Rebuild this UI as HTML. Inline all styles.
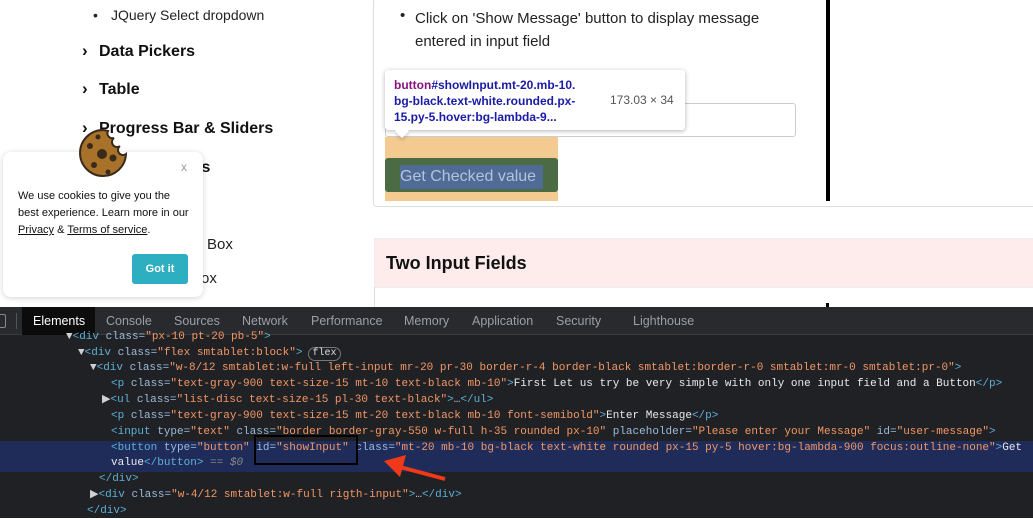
<!DOCTYPE html>
<html><head><meta charset="utf-8"><style>
*{margin:0;padding:0;box-sizing:border-box}
body{width:1033px;height:518px;overflow:hidden;background:#fff;font-family:"Liberation Sans",sans-serif;position:relative}
.a{position:absolute;white-space:nowrap}
.h{font-weight:bold;font-size:16px;color:#111}
.ch{position:absolute;font-weight:bold;font-size:17px;color:#111}
.dev{position:absolute;left:0;top:307px;width:1033px;height:211px;background:#202124}
.tab{position:absolute;top:7px;font-size:12.5px;color:#9aa0a6}
.cl{position:absolute;font-family:"Liberation Mono",monospace;font-size:11px;line-height:16px;white-space:pre;color:#cfd0d0}
.t{color:#5db0d7}.n{color:#9bbbdc}.v{color:#f29766}.w{color:#e8eaed}
</style></head><body>
<!-- left nav -->
<div class="a" style="left:93px;top:7px;font-size:14px;color:#222">•</div>
<div class="a" style="left:111px;top:7px;font-size:14px;color:#222">JQuery Select dropdown</div>
<div class="ch" style="left:82px;top:41px">›</div><div class="a h" style="left:99px;top:43px">Data Pickers</div>
<div class="ch" style="left:82px;top:79px">›</div><div class="a h" style="left:99px;top:81px">Table</div>
<div class="ch" style="left:82px;top:118px">›</div><div class="a h" style="left:99px;top:120px">Progress Bar &amp; Sliders</div>
<div class="a h" style="left:197px;top:159px">ls</div>
<div class="a" style="left:207px;top:236px;font-size:15px;color:#222">Box</div>
<div class="a" style="left:201px;top:270px;font-size:15px;color:#222">ox</div>

<!-- right card -->
<div class="a" style="left:373px;top:-2px;width:700px;height:209px;border:1px solid #ddd;border-radius:4px"></div>
<div class="a" style="left:826px;top:0;width:4px;height:201px;background:#000"></div>
<div class="a" style="left:400px;top:7px;font-size:15px;color:#222">•</div>
<div class="a" style="left:415px;top:7px;font-size:15px;color:#222;line-height:23px">Click on 'Show Message' button to display message<br>entered in input field</div>
<div class="a" style="left:385px;top:103px;width:411px;height:34px;border:1px solid #ccc;border-radius:3px"></div>
<div class="a" style="left:385px;top:137px;width:173px;height:64px;background:#f3cb91"></div>
<div class="a" style="left:385px;top:158px;width:173px;height:34px;background:#4a6b44;border-radius:3px"></div>
<div class="a" style="left:400px;top:165px;width:143px;height:24px;background:#4f6b96;color:#b3c3dc;font-size:16px;line-height:24px">Get Checked value</div>
<!-- tooltip -->
<div class="a" style="left:385px;top:70px;width:300px;height:60px;background:#fff;border-radius:3px;box-shadow:0 1px 5px rgba(0,0,0,.3)"></div>
<div class="a" style="left:397px;top:126px;width:10px;height:10px;background:#fff;transform:rotate(45deg);box-shadow:2px 2px 3px rgba(0,0,0,.15)"></div>
<div class="a" style="left:394px;top:77px;font-size:12px;font-weight:bold;line-height:16px;color:#1a1aa6"><span style="color:#881280">button</span>#showInput.mt-20.mb-10.<br>bg-black.text-white.rounded.px-<br>15.py-5.hover:bg-lambda-9...</div>
<div class="a" style="left:610px;top:93px;font-size:12px;color:#555">173.03 × 34</div>

<div class="a" style="left:374px;top:238px;width:670px;height:50px;background:#fdeceb;border:1px solid #eee"></div>
<div class="a" style="left:386px;top:253px;font-size:18px;font-weight:bold;color:#111">Two Input Fields</div>
<div class="a" style="left:374px;top:287px;width:1px;height:20px;background:#ddd"></div>
<div class="a" style="left:826px;top:303px;width:3px;height:4px;background:#000"></div>

<!-- cookie popup -->
<div class="a" style="left:3px;top:152px;width:200px;height:145px;background:#fff;border-radius:8px;box-shadow:0 1px 6px rgba(0,0,0,.18)"></div>
<svg class="a" style="left:78px;top:128px" width="50" height="50" viewBox="0 0 50 50">
<path d="M25 2 A23 23 0 1 0 48 26 A5 5 0 0 1 42 18 A5 5 0 0 1 36 10 A5 5 0 0 1 30 3 Z" fill="#a9722b" stroke="#3a2a1a" stroke-width="2"/>
<circle cx="24" cy="26" r="5" fill="#3a2a1a"/><circle cx="12" cy="18" r="3" fill="#3a2a1a"/><circle cx="16" cy="37" r="3" fill="#3a2a1a"/><circle cx="35" cy="30" r="3.5" fill="#3a2a1a"/><circle cx="20" cy="9" r="2.5" fill="#3a2a1a"/><circle cx="30" cy="44" r="2.5" fill="#3a2a1a"/>
</svg>
<div class="a" style="left:181px;top:160px;font-size:12px;color:#999">x</div>
<div class="a" style="left:18px;top:188px;font-size:11px;line-height:17px;color:#111">We use cookies to give you the<br>best experience. Learn more in our<br><u>Privacy</u> &amp; <u>Terms of service</u>.</div>
<div class="a" style="left:132px;top:254px;width:56px;height:30px;background:#2eaec1;border-radius:3px;color:#fff;font-size:11px;font-weight:bold;text-align:center;line-height:30px">Got it</div>

<!-- devtools -->
<div class="dev">
 <div style="position:absolute;left:0;top:0;width:1033px;height:28px;background:#292a2d;border-bottom:1px solid #3c3c3c"></div>
 <div style="position:absolute;left:-4px;top:7px;width:10px;height:14px;border:1px solid #888;border-radius:2px"></div>
 <div style="position:absolute;left:16px;top:6px;width:1px;height:16px;background:#555"></div>
 <div style="position:absolute;left:22px;top:0;width:73px;height:28px;background:#0c0c0c"></div>
 <div class="tab" style="left:33px;color:#fff">Elements</div>
 <div class="tab" style="left:106px">Console</div>
 <div class="tab" style="left:174px">Sources</div>
 <div class="tab" style="left:242px">Network</div>
 <div class="tab" style="left:311px">Performance</div>
 <div class="tab" style="left:404px">Memory</div>
 <div class="tab" style="left:472px">Application</div>
 <div class="tab" style="left:556px">Security</div>
 <div class="tab" style="left:633px">Lighthouse</div>
 <div style="position:absolute;left:0;top:134px;width:1033px;height:31px;background:#1f2c59"></div>
 <div class="cl" style="left:66px;top:22px">▼<span class="t">&lt;div</span> <span class="n">class=</span><span class="v">"px-10 pt-20 pb-5"</span><span class="t">&gt;</span></div>
 <div class="cl" style="left:78px;top:38px">▼<span class="t">&lt;div</span> <span class="n">class=</span><span class="v">"flex smtablet:block"</span><span class="t">&gt;</span></div>
 <div style="position:absolute;left:308px;top:40px;width:33px;height:14px;border:1px solid #777;border-radius:7px;font-family:'Liberation Mono',monospace;font-size:10px;color:#ddd;text-align:center;line-height:12px">flex</div>
 <div class="cl" style="left:90px;top:53px">▼<span class="t">&lt;div</span> <span class="n">class=</span><span class="v">"w-8/12 smtablet:w-full left-input mr-20 pr-30 border-r-4 border-black smtablet:border-r-0 smtablet:mr-0 smtablet:pr-0"</span><span class="t">&gt;</span></div>
 <div class="cl" style="left:111px;top:69px"><span class="t">&lt;p</span> <span class="n">class=</span><span class="v">"text-gray-900 text-size-15 mt-10 text-black mb-10"</span><span class="t">&gt;</span><span class="w">First Let us try be very simple with only one input field and a Button</span><span class="t">&lt;/p&gt;</span></div>
 <div class="cl" style="left:102px;top:85px">▶<span class="t">&lt;ul</span> <span class="n">class=</span><span class="v">"list-disc text-size-15 pl-30 text-black"</span><span class="t">&gt;</span>…<span class="t">&lt;/ul&gt;</span></div>
 <div class="cl" style="left:111px;top:101px"><span class="t">&lt;p</span> <span class="n">class=</span><span class="v">"text-gray-900 text-size-15 mt-20 text-black mb-10 font-semibold"</span><span class="t">&gt;</span><span class="w">Enter Message</span><span class="t">&lt;/p&gt;</span></div>
 <div class="cl" style="left:111px;top:117px"><span class="t">&lt;input</span> <span class="n">type=</span><span class="v">"text"</span> <span class="n">class=</span><span class="v">"border border-gray-550 w-full h-35 rounded px-10"</span> <span class="n">placeholder=</span><span class="v">"Please enter your Message"</span> <span class="n">id=</span><span class="v">"user-message"</span><span class="t">&gt;</span></div>
 <div class="cl" style="left:111px;top:133px"><span class="t">&lt;button</span> <span class="n">type=</span><span class="v">"button"</span> <span class="n">id=</span><span class="v">"showInput"</span> <span class="n">class=</span><span class="v">"mt-20 mb-10 bg-black text-white rounded px-15 py-5 hover:bg-lambda-900 focus:outline-none"</span><span class="t">&gt;</span><span class="w">Get</span></div>
 <div class="cl" style="left:111px;top:148px"><span class="w">value</span><span class="t">&lt;/button&gt;</span> <span style="color:#888">== <i>$0</i></span></div>
 <div class="cl" style="left:99px;top:164px"><span class="t">&lt;/div&gt;</span></div>
 <div class="cl" style="left:90px;top:180px">▶<span class="t">&lt;div</span> <span class="n">class=</span><span class="v">"w-4/12 smtablet:w-full rigth-input"</span><span class="t">&gt;</span>…<span class="t">&lt;/div&gt;</span></div>
 <div class="cl" style="left:87px;top:196px"><span class="t">&lt;/div&gt;</span></div>
 <div style="position:absolute;left:254px;top:128px;width:104px;height:30px;border:2px solid #000"></div>
 <svg style="position:absolute;left:370px;top:140px" width="80" height="36" viewBox="0 0 80 36"><line x1="75" y1="32" x2="30" y2="20" stroke="#f0381a" stroke-width="4"/><polygon points="14,14 36,8 30,30" fill="#f0381a"/></svg>
</div>
</body></html>
